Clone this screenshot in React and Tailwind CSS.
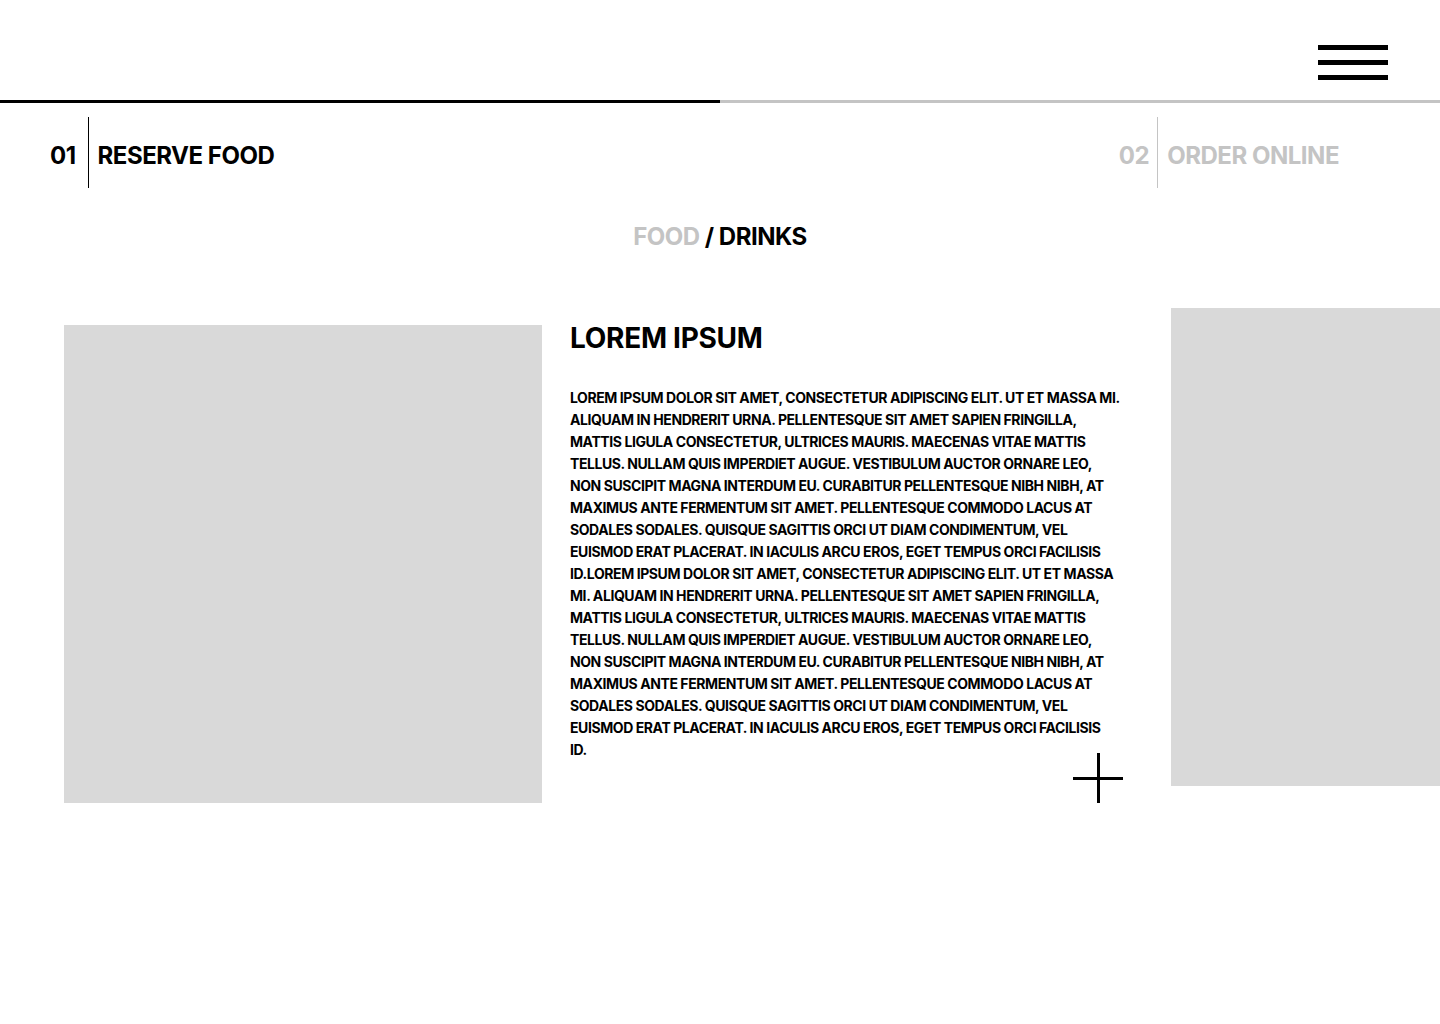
const para =
  "LOREM IPSUM DOLOR SIT AMET, CONSECTETUR ADIPISCING ELIT. UT ET MASSA MI. ALIQUAM IN HENDRERIT URNA. PELLENTESQUE SIT AMET SAPIEN FRINGILLA, MATTIS LIGULA CONSECTETUR, ULTRICES MAURIS. MAECENAS VITAE MATTIS TELLUS. NULLAM QUIS IMPERDIET AUGUE. VESTIBULUM AUCTOR ORNARE LEO, NON SUSCIPIT MAGNA INTERDUM EU. CURABITUR PELLENTESQUE NIBH NIBH, AT MAXIMUS ANTE FERMENTUM SIT AMET. PELLENTESQUE COMMODO LACUS AT SODALES SODALES. QUISQUE SAGITTIS ORCI UT DIAM CONDIMENTUM, VEL EUISMOD ERAT PLACERAT. IN IACULIS ARCU EROS, EGET TEMPUS ORCI FACILISIS ID.";

export default function App() {
  return (
    <div className="min-h-[1024px] w-[1440px] overflow-hidden bg-white font-['Inter',sans-serif] text-black">
      {/* header */}
      <header className="flex h-[100px] items-start justify-end pr-[52px] pt-[45px]">
        <button className="flex w-[70px] flex-col gap-[10px]">
          <span className="h-[5px] w-full bg-black" />
          <span className="h-[5px] w-full bg-black" />
          <span className="h-[5px] w-full bg-black" />
        </button>
      </header>

      {/* progress */}
      <div className="flex h-[3px]">
        <div className="w-1/2 bg-black" />
        <div className="w-1/2 bg-[#c4c4c4]" />
      </div>

      {/* steps */}
      <nav className="mt-[14px] flex items-stretch justify-between pl-[50px] pr-[101px]">
        <div className="flex h-[71px] items-center text-[24px] font-bold tracking-[-0.02em]">
          <span className="mt-[7px]">01</span>
          <span className="ml-[12px] mr-[9px] h-full w-px bg-black" />
          <span className="mt-[7px]">RESERVE FOOD</span>
        </div>
        <div className="flex h-[71px] items-center text-[24px] font-bold tracking-[-0.02em] text-[#c4c4c4]">
          <span className="mt-[7px]">02</span>
          <span className="ml-[8px] mr-[9px] h-full w-px bg-[#c4c4c4]" />
          <span className="mt-[7px]">ORDER ONLINE</span>
        </div>
      </nav>

      {/* tabs */}
      <div className="mt-[31px] text-center text-[24px] font-bold tracking-[-0.02em]">
        <span className="text-[#c4c4c4]">FOOD</span> / DRINKS
      </div>

      {/* content */}
      <section className="mt-[53px] flex items-start">
        <div className="ml-[64px] mt-[17px] h-[478px] w-[478px] shrink-0 bg-[#d9d9d9]" />
        <div className="ml-[28px] mt-[13px] flex w-[553px] shrink-0 flex-col">
          <h2 className="text-[28px] font-bold leading-[34px] tracking-[-0.01em]">LOREM IPSUM</h2>
          <p className="mt-[32px] w-[550px] text-[14px] font-bold leading-[22px] tracking-[-0.03em]">
            {para}
            {para}
          </p>
          <div className="relative -mt-[8px] h-[50px] w-[50px] self-end">
            <span className="absolute left-0 top-[24px] h-[3px] w-[50px] bg-black" />
            <span className="absolute left-[24px] top-0 h-[50px] w-[3px] bg-black" />
          </div>
        </div>
        <div className="ml-[48px] h-[478px] flex-1 bg-[#d9d9d9]" />
      </section>
    </div>
  );
}
